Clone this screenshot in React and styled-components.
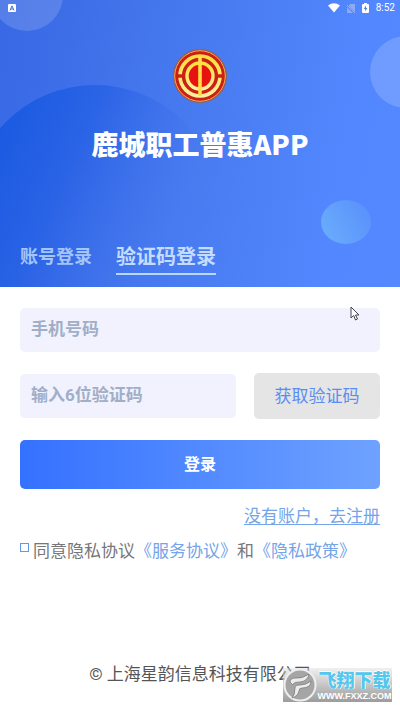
import React from "react";
import styled, { createGlobalStyle } from "styled-components";

const GlobalStyle = createGlobalStyle`
  *, *::before, *::after { box-sizing: border-box; }
  body { margin: 0; background: #fff; }
  body, button, input { font-family: Roboto, "Noto Sans CJK SC", sans-serif; }
`;

const Page = styled.div`
  position: relative;
  display: flex;
  flex-direction: column;
  min-height: 100vh;
  overflow: hidden;
`;

const Header = styled.header`
  position: relative;
  display: flex;
  flex-direction: column;
  align-items: center;
  background: linear-gradient(100deg, #3868e4 0%, #497cf1 52%, #5287ff 82%, #5488ff 100%);
`;

const Backdrop = styled.svg`
  position: absolute;
  inset: 0;
  width: 100%;
  height: 100%;
`;

const StatusBar = styled.div`
  position: relative;
  display: flex;
  align-items: center;
  align-self: stretch;
  height: 16px;
  padding: 0 5px 0 8px;
  color: #fff;
`;

const StatusIcons = styled.div`
  display: flex;
  align-items: center;
  gap: 7px;
  margin-left: auto;
`;

const Clock = styled.span`
  font-size: 10px;
  line-height: 16px;
`;

const Emblem = styled.svg`
  position: relative;
  width: 56px;
  height: 56px;
  margin-top: 32px;
`;

const Title = styled.h1`
  position: relative;
  margin: 24px 0 0;
  color: #fff;
  font-family: "Noto Sans CJK SC", sans-serif;
  font-size: 27px;
  font-weight: 900;
  line-height: 32px;
  white-space: nowrap;
`;

const Tabs = styled.nav`
  position: relative;
  display: flex;
  align-items: center;
  align-self: stretch;
  gap: 24px;
  margin-top: 80px;
  padding: 0 20px 12px;
`;

const Tab = styled.button`
  height: 35px;
  padding: 0;
  border: 0;
  border-bottom: 2px solid ${(p) => (p.$active ? "#b9d7ff" : "transparent")};
  background: none;
  color: ${(p) => (p.$active ? "#c3dcff" : "#a3c5fb")};
  font-size: ${(p) => (p.$active ? "20px" : "18px")};
  font-weight: 700;
  line-height: 32px;
  white-space: nowrap;
`;

const Form = styled.form`
  display: flex;
  flex-direction: column;
  padding: 21px 20px 0;
`;

const Field = styled.input`
  flex: 1;
  width: 100%;
  min-width: 0;
  min-height: 44px;
  padding: 0 11px 3px;
  border: 0;
  border-radius: 5px;
  outline: 0;
  background: #f1f2fd;
  color: #51647f;
  font-size: 17px;
  font-weight: 700;
  &::placeholder { color: #a0aec8; opacity: 1; }
`;

const CodeRow = styled.div`
  display: flex;
  align-items: center;
  gap: 18px;
  margin-top: 21px;
`;

const CodeButton = styled.button`
  flex: 0 0 35%;
  height: 46px;
  border: 0;
  border-radius: 5px;
  background: #e5e5e5;
  color: #5b8cf2;
  font-size: 17px;
  line-height: 24px;
`;

const Submit = styled.button`
  height: 49px;
  margin-top: 21px;
  padding: 0 0 4px;
  border: 0;
  border-radius: 5px;
  background: linear-gradient(90deg, #3471ff, #6fa2ff);
  color: #fff;
  font-size: 16px;
  font-weight: 700;
`;

const TextLink = styled.a`
  color: #75a4e9;
  text-decoration: ${(p) => (p.$underlined ? "underline" : "none")};
  text-underline-offset: 2px;
`;

const RegisterRow = styled.div`
  margin-top: 15px;
  font-size: 17px;
  line-height: 24px;
  text-align: right;
`;

const Agreement = styled.div`
  display: flex;
  align-items: flex-start;
  gap: 4px;
  margin-top: 11px;
  color: #777;
  font-size: 17px;
  line-height: 24px;
  white-space: nowrap;
`;

const Tick = styled.input`
  appearance: none;
  flex: none;
  width: 9px;
  height: 9px;
  margin: 4px 0 0;
  border: 1px solid #5f98ed;
  background: #fff;
  &:checked { background: #5f98ed; }
`;

const Footer = styled.footer`
  margin-top: auto;
  padding-bottom: 25px;
  color: #555;
  font-size: 17px;
  line-height: 24px;
  text-align: center;
  white-space: nowrap;
`;

const Pointer = styled.svg`
  position: absolute;
  top: 306px;
  left: 350px;
  width: 10px;
  height: 15px;
`;

const Watermark = styled.div`
  position: absolute;
  right: 8px;
  bottom: 9px;
  display: flex;
  align-items: center;
  width: 109px;
  height: 34px;
  background: linear-gradient(#d9d9d966, #b8b8b8ee 60%, #9c9c9c);
`;

const WatermarkLogo = styled.svg`
  flex: none;
  width: 34px;
  height: 34px;
`;

const WatermarkText = styled.div`
  display: flex;
  flex: 1;
  flex-direction: column;
  align-items: center;
  white-space: nowrap;
`;

const WatermarkName = styled.span`
  color: #55c6ed;
  font-family: "Noto Sans CJK SC", sans-serif;
  font-size: 18px;
  font-weight: 900;
  line-height: 22px;
  text-shadow: 0 0 1px #fff, 1px 0 #fff, 0 -1px #fff;
`;

const WatermarkSite = styled.span`
  color: #fff;
  font-family: "Liberation Sans", sans-serif;
  font-size: 9px;
  font-weight: 700;
  line-height: 12px;
`;

function HeaderBackdrop() {
  return (
    <Backdrop viewBox="0 0 400 287" preserveAspectRatio="none" aria-hidden="true">
      <defs>
        <linearGradient id="dome" x1="0" y1="0.3" x2="0.75" y2="0.65">
          <stop offset="0" stopColor="#1659e1" stopOpacity=".95" />
          <stop offset=".45" stopColor="#1d5be3" stopOpacity=".6" />
          <stop offset="1" stopColor="#3d70eb" stopOpacity="0" />
        </linearGradient>
        <linearGradient id="bubble" x1="0" y1=".75" x2="1" y2=".25">
          <stop offset="0" stopColor="#69adfb" />
          <stop offset="1" stopColor="#5a90fc" />
        </linearGradient>
      </defs>
      <circle cx="95" cy="211" r="126" fill="url(#dome)" />
      <circle cx="27" cy="-5" r="36" fill="#fff" fillOpacity=".15" />
      <circle cx="406" cy="72" r="36" fill="#fff" fillOpacity=".17" />
      <ellipse cx="346" cy="222" rx="25" ry="22" fill="url(#bubble)" />
    </Backdrop>
  );
}

function UnionEmblem() {
  return (
    <Emblem viewBox="0 0 56 56" fill="none" role="img" aria-label="工会">
      <defs>
        <linearGradient id="gold" x1="0" y1="0" x2="0" y2="1">
          <stop offset="0" stopColor="#ffdf3d" />
          <stop offset=".5" stopColor="#ffe96b" />
          <stop offset="1" stopColor="#fff0a0" />
        </linearGradient>
      </defs>
      <circle cx="28" cy="28" r="26.5" fill="#cc2015" stroke="#816b67" />
      <circle cx="28" cy="28" r="25.3" stroke="#efb45b" />
      <circle cx="28" cy="28" r="20" stroke="url(#gold)" strokeWidth="3.6" />
      <path d="M4 28h48" stroke="#cc2015" strokeWidth="3.4" />
      <circle cx="28" cy="28" r="13" fill="#e61310" stroke="url(#gold)" strokeWidth="3.4" />
      <path d="M28 8v40" stroke="#ffdf45" strokeWidth="3.6" />
    </Emblem>
  );
}

export default function App() {
  return (
    <Page>
      <GlobalStyle />
      <Header>
        <HeaderBackdrop />
        <StatusBar>
          <svg width="8" height="8" viewBox="0 0 8 8" aria-hidden="true">
            <rect width="8" height="8" rx="1" fill="#fff" />
            <path d="M2 6.5 4 1.8l2 4.7M2.8 5h2.4" fill="none" stroke="#4a72d9" />
          </svg>
          <StatusIcons>
            <svg width="12" height="10" viewBox="0 0 12 10" aria-hidden="true">
              <path d="M0 2.4Q6-1.8 12 2.4L6 9.6Z" fill="#fff" />
            </svg>
            <svg width="8" height="9" viewBox="0 0 8 9" aria-hidden="true">
              <path d="M3 0h5v8L2 2zM0 3l6 6H0z" fill="#a8bff7" fillOpacity=".65" />
              <path d="m0 1 8 8" stroke="#a8bff7" strokeWidth=".8" />
            </svg>
            <svg width="7" height="10" viewBox="0 0 7 10" aria-hidden="true">
              <path d="M2 0h3v1h1q1 0 1 1v7q0 1-1 1H1q-1 0-1-1V2q0-1 1-1h1z" fill="#fff" />
              <path d="M4 2.5 1.8 6h1.4v2.5L5.3 5H4z" fill="#4d7de9" />
            </svg>
            <Clock>8:52</Clock>
          </StatusIcons>
        </StatusBar>
        <UnionEmblem />
        <Title>鹿城职工普惠APP</Title>
        <Tabs>
          <Tab type="button">账号登录</Tab>
          <Tab type="button" $active>验证码登录</Tab>
        </Tabs>
      </Header>
      <Form onSubmit={(e) => e.preventDefault()}>
        <Field type="tel" placeholder="手机号码" aria-label="手机号码" />
        <CodeRow>
          <Field inputMode="numeric" placeholder="输入6位验证码" aria-label="输入6位验证码" />
          <CodeButton type="button">获取验证码</CodeButton>
        </CodeRow>
        <Submit type="submit">登录</Submit>
        <RegisterRow>
          <TextLink href="#register" $underlined>没有账户，去注册</TextLink>
        </RegisterRow>
        <Agreement>
          <Tick type="checkbox" id="agree" />
          <div>
            <label htmlFor="agree">同意隐私协议</label>
            <TextLink href="#service">《服务协议》</TextLink>和<TextLink href="#privacy">《隐私政策》</TextLink>
          </div>
        </Agreement>
      </Form>
      <Footer>© 上海星韵信息科技有限公司</Footer>
      <Pointer viewBox="0 0 10 15" aria-hidden="true">
        <path d="M1 1v11l2.7-2.5L5.5 14l2-1-2-4H9z" fill="#fff" stroke="#454550" />
      </Pointer>
      <Watermark>
        <WatermarkLogo viewBox="0 0 34 34" fill="none" aria-hidden="true">
          <circle cx="17" cy="17" r="15.5" fill="#a5a5a5" stroke="#eee" strokeWidth="2" />
          <path d="M7 14q0-4 6-4 6 1 13-4-1 7-9 8-7 0-7 3zM12 20q0-3 5-3 6 0 11-4 0 7-9 7-3 0-3 3-1 5-7 7 3-3 3-10z" fill="#ececec" stroke="#777" strokeWidth=".7" />
        </WatermarkLogo>
        <WatermarkText>
          <WatermarkName>飞翔下载</WatermarkName>
          <WatermarkSite>WWW.FXXZ.COM</WatermarkSite>
        </WatermarkText>
      </Watermark>
    </Page>
  );
}
